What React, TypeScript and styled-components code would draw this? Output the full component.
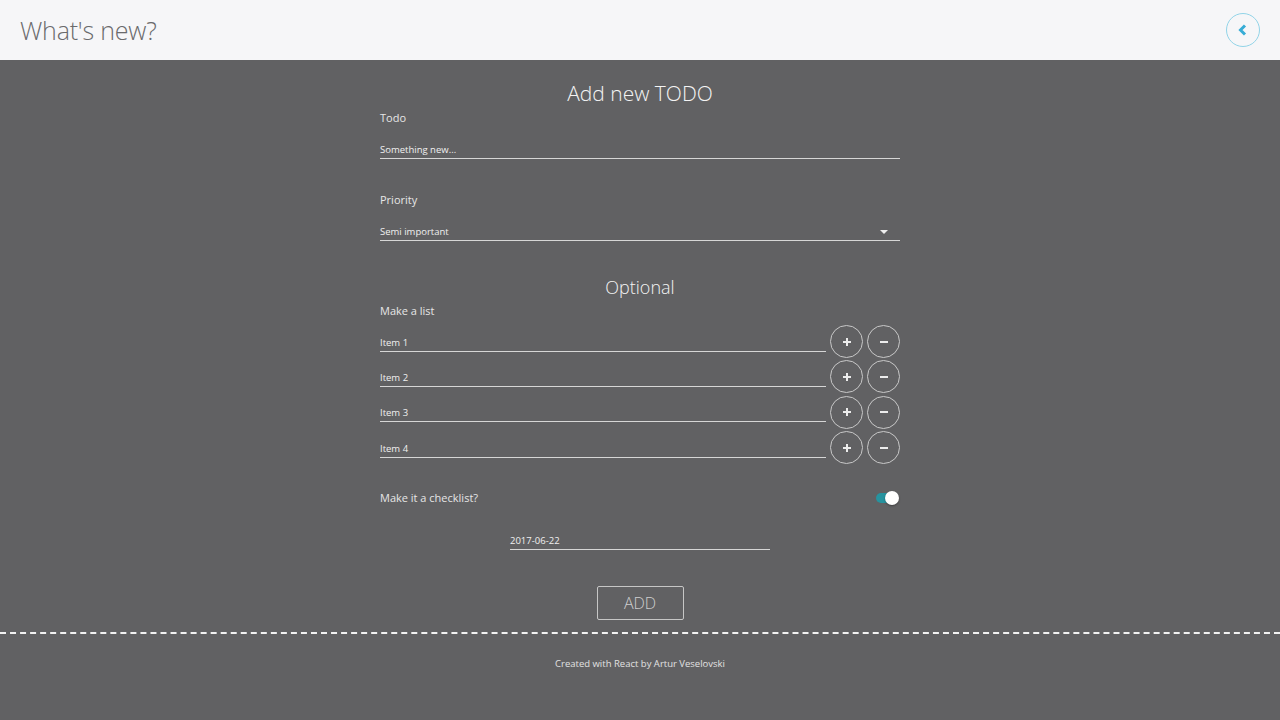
import { createGlobalStyle } from "styled-components";
import styled from "styled-components";

const GlobalStyle = createGlobalStyle`
    html, body {
        margin: 0;
        padding: 0;
        background: #616163;
        font-family: "Open Sans", "Noto Sans", sans-serif;
    }
`;

const Page = styled.div`
    min-height: 100vh;
    display: flex;
    flex-direction: column;
`;

const Header = styled.header`
    height: 60px;
    background: #f6f6f8;
    display: flex;
    align-items: center;
    justify-content: space-between;
    padding: 0 20px;
    box-sizing: border-box;
`;

const HeaderTitle = styled.h1`
    margin: 0;
    font-size: 25px;
    font-weight: 300;
    color: #6a6a6c;
    letter-spacing: -0.2px;
`;

const BackButton = styled.button`
    width: 34px;
    height: 34px;
    border-radius: 50%;
    border: 1px solid #92d4e8;
    background: transparent;
    display: flex;
    align-items: center;
    justify-content: center;
    padding: 0;
    margin-top: -1px;
`;

const Form = styled.form`
    width: 520px;
    margin: 0 auto;
    display: flex;
    flex-direction: column;
    color: #ececec;
`;

const Heading = styled.h2<{ $size: number }>`
    margin: 0;
    text-align: center;
    font-weight: 300;
    font-size: ${p => p.$size}px;
    color: #f4f4f4;
`;

const Label = styled.div`
    font-size: 11px;
    font-weight: 400;
    color: #e6e6e6;
`;

const Field = styled.div<{ $width?: number }>`
    display: flex;
    align-items: flex-end;
    justify-content: space-between;
    border-bottom: 1px solid #d6d6d6;
    font-size: 9.5px;
    color: #f0f0f0;
    padding-bottom: 2px;
    ${p => p.$width ? `width: ${p.$width}px;` : "flex: 1;"}
`;

const ItemRow = styled.div`
    display: flex;
    align-items: center;
    gap: 4px;
    height: 35.3px;
`;

const ItemField = styled(Field)`
    margin-top: 4px;
`;

const CircleButton = styled.button`
    width: 33px;
    height: 33px;
    border-radius: 50%;
    border: 1px solid #c8c8c8;
    background: transparent;
    display: flex;
    align-items: center;
    justify-content: center;
    padding: 0;
    flex-shrink: 0;
`;

const ToggleRow = styled.div`
    display: flex;
    align-items: center;
    justify-content: space-between;
`;

const Toggle = styled.div`
    position: relative;
    width: 18px;
    height: 10px;
    border-radius: 5px;
    background: #26939f;
    margin-right: 6px;
`;

const Knob = styled.span`
    position: absolute;
    right: -5px;
    top: -2px;
    width: 14px;
    height: 14px;
    border-radius: 50%;
    background: #ffffff;
    box-shadow: 0 1px 2px rgba(0, 0, 0, 0.35);
`;

const Center = styled.div`
    display: flex;
    justify-content: center;
`;

const AddButton = styled.button`
    width: 87px;
    height: 34px;
    border: 1px solid #c6c6c6;
    border-radius: 2px;
    background: transparent;
    color: #cfcfcf;
    font-family: inherit;
    font-size: 16px;
    font-weight: 300;
    padding: 0;
`;

const Divider = styled.div`
    border-top: 2px dashed #f2f2f2;
`;

const Footer = styled.footer`
    text-align: center;
    font-size: 9.5px;
    color: #e2e2e2;
    padding-top: 23px;
`;

const items = ["Item 1", "Item 2", "Item 3", "Item 4"];

export default function App() {
    return (
        <Page>
            <GlobalStyle />
            <Header>
                <HeaderTitle>What's new?</HeaderTitle>
                <BackButton>
                    <svg width="12" height="12" viewBox="0 0 12 12">
                        <path d="M8 1.5 L3.5 6 L8 10.5" stroke="#36acd6" strokeWidth="3" fill="none" strokeLinejoin="miter" />
                    </svg>
                </BackButton>
            </Header>
            <Form onSubmit={e => e.preventDefault()}>
                <Heading $size={21} style={{ marginTop: 19 }}>Add new TODO</Heading>
                <Label style={{ marginTop: 3 }}>Todo</Label>
                <Field style={{ marginTop: 18 }}>Something new...</Field>
                <Label style={{ marginTop: 33 }}>Priority</Label>
                <Field style={{ marginTop: 18 }}>
                    <span>Semi important</span>
                    <svg width="8" height="5" viewBox="0 0 8 5" style={{ marginRight: 12, marginBottom: 3 }}>
                        <path d="M0 0 L8 0 L4 4 Z" fill="#eeeeee" />
                    </svg>
                </Field>
                <Heading $size={18} style={{ marginTop: 34 }}>Optional</Heading>
                <Label style={{ marginTop: 4 }}>Make a list</Label>
                <div style={{ marginTop: 6 }}>
                    {items.map(item => (
                        <ItemRow key={item}>
                            <ItemField>{item}</ItemField>
                            <CircleButton>
                                <svg width="10" height="10" viewBox="0 0 10 10">
                                    <path d="M5 1 V9 M1 5 H9" stroke="#ececec" strokeWidth="2" />
                                </svg>
                            </CircleButton>
                            <CircleButton>
                                <svg width="10" height="10" viewBox="0 0 10 10">
                                    <path d="M1 5 H9" stroke="#ececec" strokeWidth="2" />
                                </svg>
                            </CircleButton>
                        </ItemRow>
                    ))}
                </div>
                <ToggleRow style={{ marginTop: 25 }}>
                    <Label>Make it a checklist?</Label>
                    <Toggle><Knob /></Toggle>
                </ToggleRow>
                <Center style={{ marginTop: 29 }}>
                    <Field $width={260}>2017-06-22</Field>
                </Center>
                <Center style={{ marginTop: 36 }}>
                    <AddButton type="submit">ADD</AddButton>
                </Center>
            </Form>
            <Divider style={{ marginTop: 12 }} />
            <Footer>Created with React by Artur Veselovski</Footer>
        </Page>
    );
}
